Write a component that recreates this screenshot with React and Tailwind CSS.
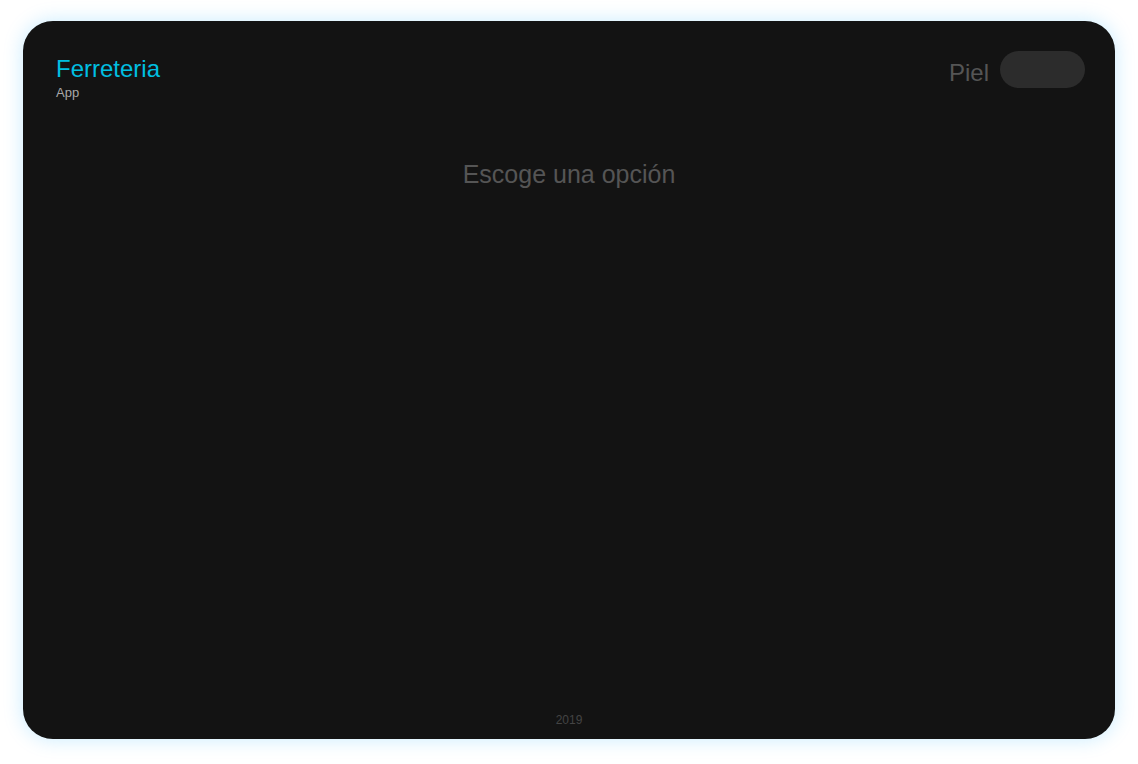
export default function App() {
  return (
    <div className="w-[1138px] h-[764px] bg-white pt-[21px] pl-[23px] pr-[23px] pb-[25px]" style={{ fontFamily: '"Liberation Sans", Arial, sans-serif' }}>
      <div className="w-full h-full bg-[#131313] rounded-[30px] shadow-[0_0_20px_rgba(0,170,255,0.22)] flex flex-col px-[33px] pt-[31px] pb-[10px]">
        <div className="flex justify-between items-start">
          <div className="flex flex-col">
            <div className="text-[24px] leading-[34px] text-[#00bfe0]">Ferreteria</div>
            <div className="text-[13px] leading-[13px] text-[#a8a8a8]">App</div>
          </div>
          <div className="flex items-start gap-[11px] mr-[-3px] mt-[-1px]">
            <span className="text-[24px] leading-[28px] text-[#555555] mt-[8px]">Piel</span>
            <div className="w-[85px] h-[37px] rounded-full bg-[#2c2c2c]" />
          </div>
        </div>
        <div className="text-center text-[25px] text-[#555555] mt-[57px]">Escoge una opción</div>
        <div className="flex-1" />
        <div className="text-center text-[12px] text-[#444444]">2019</div>
      </div>
    </div>
  );
}
